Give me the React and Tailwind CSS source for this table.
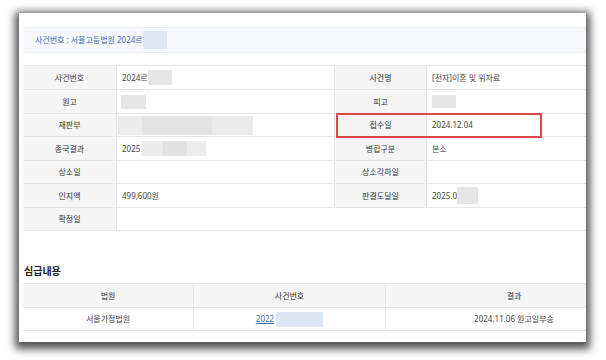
import React from "react";

const font = { fontFamily: '"Noto Sans", "Noto Sans CJK KR", sans-serif' };

// blurred masking block used to hide personal data
const Mask = ({ className = "" }) => (
  <span className={`inline-block bg-[#e6e6e6] blur-[0.6px] ${className}`} />
);

const Label = ({ children, h }) => (
  <div
    className={`${h} flex items-center justify-center bg-[#f5f5f5] border-b border-r border-[#e6e6e6] text-[#333]`}
  >
    {children}
  </div>
);

const Value = ({ children, h, className = "" }) => (
  <div className={`${h} flex items-center pl-[5px] border-b border-r border-[#e6e6e6] text-[#444] ${className}`}>
    {children}
  </div>
);

const rows = [
  { h: "h-[24px]", l1: "사건번호", v1: <>2024르<Mask className="w-[24px] h-[15px]" /></>, l2: "사건명", v2: "[전자]이혼 및 위자료" },
  { h: "h-[24px]", l1: "원고", v1: <Mask className="w-[25px] h-[14px] -ml-[1px]" />, l2: "피고", v2: <Mask className="w-[24px] h-[13px]" /> },
  {
    h: "h-[23px]",
    l1: "재판부",
    v1: (
      <span className="-ml-[4px] inline-flex h-[19px] blur-[0.6px]">
        <span className="w-[24px] bg-[#ececec]" />
        <span className="w-[70px] bg-[#e3e3e3]" />
        <span className="w-[41px] bg-[#ebebeb]" />
      </span>
    ),
    l2: "접수일",
    v2: "2024.12.04",
  },
  {
    h: "h-[24px]",
    l1: "종국결과",
    v1: (
      <>
        2025
        <span className="inline-flex h-[15px] blur-[0.6px] ml-[1px]">
          <span className="w-[22px] bg-[#ececec]" />
          <span className="w-[24px] bg-[#e2e2e2]" />
          <span className="w-[19px] bg-[#ededed]" />
        </span>
      </>
    ),
    l2: "병합구분",
    v2: "본소",
  },
  { h: "h-[23px]", l1: "상소일", v1: "", l2: "상소각하일", v2: "" },
  { h: "h-[24px]", l1: "인지액", v1: "499,600원", l2: "판결도달일", v2: <>2025.0<Mask className="w-[21px] h-[17px]" /></> },
];

export default function App() {
  return (
    <div className="w-[606px] h-[360px] bg-white overflow-hidden pt-[13px] pl-[19px]" style={font}>
      <div className="w-[567px] h-[329px] bg-white overflow-hidden pl-[4px] pt-[14px] shadow-[0_3px_8px_4px_rgba(0,0,0,0.68)]">
        {/* case title bar */}
        <div className="h-[26px] flex items-center pl-[12px] bg-[#f6f8fb] border-y border-[#e9edf2] text-[8px] text-[#3b6cb5]">
          사건번호 : 서울고등법원 2024르
          <span className="inline-block w-[24px] h-[18px] bg-[#dfe7f3] blur-[0.6px]" />
        </div>

        {/* case detail table */}
        <div className="relative mt-[12px] w-[700px] border-t border-[#e6e6e6] text-[8px] grid grid-cols-[94px_218px_92px_296px]">
          {rows.map((r) => (
            <React.Fragment key={r.l1}>
              <Label h={r.h}>{r.l1}</Label>
              <Value h={r.h}>{r.v1}</Value>
              <Label h={r.h}>{r.l2}</Label>
              <Value h={r.h}>{r.v2}</Value>
            </React.Fragment>
          ))}
          <Label h="h-[23px]">확정일</Label>
          <Value h="h-[23px]" className="col-span-3" />
          <div className="absolute left-[313px] top-[47px] w-[206px] h-[25px] border-2 border-[#e0474c]" />
        </div>

        <div className="mt-[32px] h-[16px] leading-[16px] pl-[1px] text-[10px] font-bold text-[#222]">심급내용</div>

        {/* lower court table */}
        <div className="mt-[4px] w-[620px] border-t border-[#e6e6e6] text-[8px] grid grid-cols-[171px_192px_257px]">
          {["법원", "사건번호", "결과"].map((t) => (
            <div key={t} className="h-[24px] flex items-center justify-center bg-[#f5f5f5] border-b border-r border-[#e6e6e6] text-[#333]">
              {t}
            </div>
          ))}
          <div className="h-[23px] flex items-center justify-center border-b border-r border-[#e6e6e6] text-[#444]">서울가정법원</div>
          <div className="h-[23px] flex items-center justify-center border-b border-r border-[#e6e6e6]">
            <span className="text-[#3b6cb5] underline">2022</span>
            <span className="inline-block ml-[2px] w-[47px] h-[15px] bg-[#dde7f4] blur-[0.6px]" />
          </div>
          <div className="h-[23px] flex items-center justify-center border-b border-r border-[#e6e6e6] text-[#444]">2024.11.06 원고일부승</div>
        </div>
      </div>
    </div>
  );
}
